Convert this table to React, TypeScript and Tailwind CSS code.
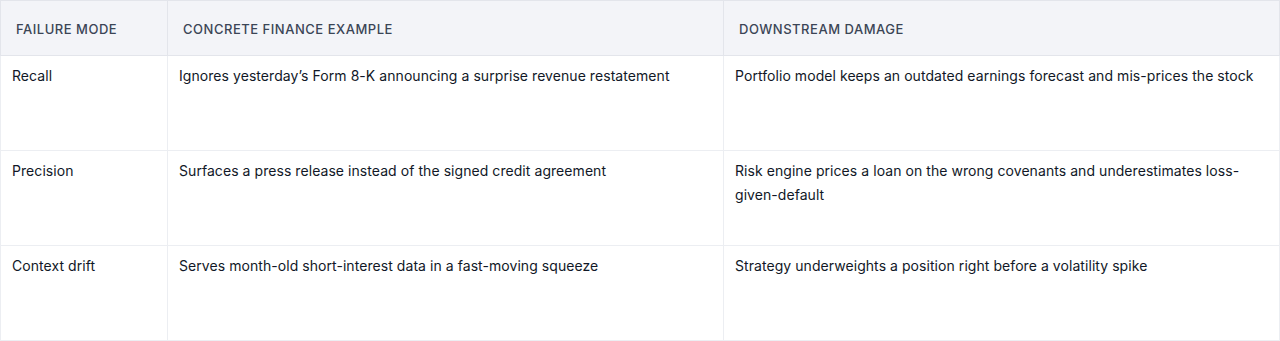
const rows = [
  {
    mode: "Recall",
    example: "Ignores yesterday’s Form 8-K announcing a surprise revenue restatement",
    damage: "Portfolio model keeps an outdated earnings forecast and mis-prices the stock",
  },
  {
    mode: "Precision",
    example: "Surfaces a press release instead of the signed credit agreement",
    damage: "Risk engine prices a loan on the wrong covenants and underestimates loss-given-default",
  },
  {
    mode: "Context drift",
    example: "Serves month-old short-interest data in a fast-moving squeeze",
    damage: "Strategy underweights a position right before a volatility spike",
  },
];

export default function App() {
  return (
    <div className="bg-white font-['Inter',sans-serif]">
      <table className="w-[1280px] table-fixed border-collapse border border-[#e3e5eb]">
        <colgroup>
          <col className="w-[167px]" />
          <col className="w-[556px]" />
          <col />
        </colgroup>
        <thead>
          <tr className="h-[55px] bg-[#f3f4f8]">
            {["Failure mode", "Concrete finance example", "Downstream damage"].map((h) => (
              <th
                key={h}
                className="border border-[#e3e5eb] pl-[15px] pr-4 pt-1 text-left align-middle text-[13px] font-medium uppercase tracking-[0.04em] text-[#3b4556]"
              >
                {h}
              </th>
            ))}
          </tr>
        </thead>
        <tbody>
          {rows.map((r) => (
            <tr key={r.mode} className="h-[95px]">
              <td className="border border-[#eceef2] pl-[11px] pr-3 pt-2 align-top text-sm leading-6 tracking-[0.06px] text-[#111827]">
                {r.mode}
              </td>
              <td className="border border-[#eceef2] pl-[11px] pr-3 pt-2 align-top text-sm leading-6 tracking-[0.06px] text-[#111827]">
                {r.example}
              </td>
              <td className="border border-[#eceef2] pl-[11px] pr-3 pt-2 align-top text-sm leading-6 tracking-[0.06px] text-[#111827]">
                {r.damage}
              </td>
            </tr>
          ))}
        </tbody>
      </table>
    </div>
  );
}
